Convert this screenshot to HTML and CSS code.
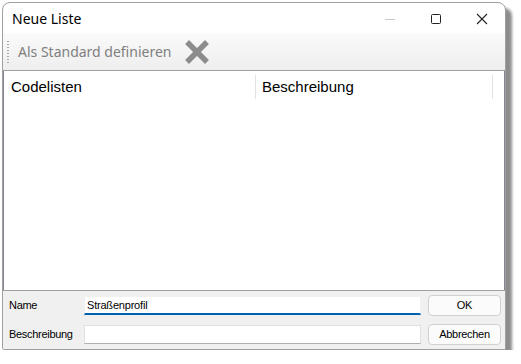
FILE: index.html
```html
<!DOCTYPE html>
<html lang="de">
<head>
    <meta charset="UTF-8">
    <title>Neue Liste</title>
    <link rel="stylesheet" href="styles.css">
</head>
<body>
<div class="window">
    <!-- Title bar -->
    <div class="titlebar">
        <span class="title">Neue Liste</span>
        <div class="controls">
            <span class="ctl"><svg width="12" height="12" viewBox="0 0 12 12"><line x1="1" y1="6.5" x2="11" y2="6.5" stroke="#c8c8c8" stroke-width="1"/></svg></span>
            <span class="ctl"><svg width="12" height="12" viewBox="0 0 12 12"><rect x="1.5" y="1.5" width="9" height="9" rx="1" fill="none" stroke="#222" stroke-width="1"/></svg></span>
            <span class="ctl"><svg width="12" height="12" viewBox="0 0 12 12"><path d="M1 1 L11 11 M11 1 L1 11" stroke="#222" stroke-width="1.1"/></svg></span>
        </div>
    </div>

    <!-- Toolbar -->
    <div class="toolbar">
        <span class="grip"></span>
        <span class="tool-text">Als Standard definieren</span>
        <svg class="tool-icon" width="24" height="24" viewBox="0 0 24 24">
            <path d="M4 4 L20 20 M20 4 L4 20" stroke="#8c8c8c" stroke-width="5.5" stroke-linecap="square"/>
        </svg>
    </div>

    <!-- List -->
    <div class="list">
        <div class="list-head">
            <div class="col col-code">Codelisten</div>
            <div class="col col-desc">Beschreibung</div>
        </div>
    </div>

    <!-- Form -->
    <div class="form">
        <div class="form-row">
            <label>Name</label>
            <input class="field focus" type="text" value="Straßenprofil">
            <button>OK</button>
        </div>
        <div class="form-row">
            <label>Beschreibung</label>
            <input class="field" type="text" value="">
            <button>Abbrechen</button>
        </div>
    </div>
</div>
</body>
</html>
```

FILE: styles.css
```css
body {
    margin: 0;
    background: #fff;
    font-family: "Liberation Sans", Arial, sans-serif;
}

.window {
    margin: 2px 0 0 2px;
    width: 502px;
    height: 346px;
    border: 1px solid #a0a0a0;
    border-radius: 8px 8px 2px 2px;
    background: #fff;
    box-shadow: 6px 6px 3px rgba(0, 0, 0, 0.45);
    display: flex;
    flex-direction: column;
    overflow: hidden;
}

.titlebar {
    height: 30px;
    display: flex;
    align-items: center;
    justify-content: space-between;
    flex-shrink: 0;
}

.title {
    font-family: "Noto Sans", "Open Sans", sans-serif;
    font-size: 14px;
    color: #000;
    margin-left: 9px;
    margin-top: 1px;
}

.controls {
    display: flex;
    margin-top: 2px;
}

.ctl {
    width: 46px;
    display: flex;
    justify-content: center;
}

.toolbar {
    height: 37px;
    flex-shrink: 0;
    display: flex;
    align-items: center;
    background: linear-gradient(#fafafa, #eeeeee);
    border-bottom: 1px solid #a0a0a0;
}

.grip {
    width: 2px;
    height: 22px;
    margin-left: 4px;
    background: repeating-linear-gradient(#a8a8a8 0 1px, transparent 1px 3px);
}

.tool-text {
    margin-left: 9px;
    font-family: "Noto Sans", "Open Sans", sans-serif;
    font-size: 14px;
    color: #7f7f7f;
}

.tool-icon {
    margin-left: 13px;
}

.list {
    flex: 1;
    border-left: 1px solid #828790;
    border-right: 1px solid #828790;
    background: #fff;
}

.list-head {
    display: flex;
    height: 28px;
    align-items: center;
}

.col {
    font-size: 15px;
    color: #000;
    height: 24px;
    line-height: 24px;
    margin-top: 3px;
    border-right: 1px solid #e2e2e2;
}

.col-code {
    width: 244px;
    padding-left: 7px;
}

.col-desc {
    width: 230px;
    padding-left: 6px;
}

.form {
    height: 59px;
    flex-shrink: 0;
    background: #f0f0f0;
    border-top: 1px solid #a0a0a0;
    display: flex;
    flex-direction: column;
    gap: 9px;
    padding-top: 4px;
    box-sizing: border-box;
}

.form-row {
    display: flex;
    align-items: center;
    height: 20px;
}

.form-row label {
    width: 75px;
    padding-left: 6px;
    font-size: 11px;
    letter-spacing: -0.3px;
    color: #000;
}

.field {
    width: 337px;
    height: 19px;
    box-sizing: border-box;
    border: 1px solid #e0e0e0;
    border-bottom-color: #b0b0b0;
    background: #fff;
    font-family: "Liberation Sans", Arial, sans-serif;
    font-size: 11px;
    letter-spacing: -0.2px;
    padding: 0 2px;
    margin: 0;
    outline: none;
}

.field.focus {
    border-color: #f0f0f0;
    border-bottom: 2px solid #0063b1;
}

.form-row button {
    margin-left: 7px;
    width: 73px;
    height: 21px;
    border: 1px solid #d0d0d0;
    border-radius: 4px;
    background: #fbfbfb;
    font-family: "Liberation Sans", Arial, sans-serif;
    font-size: 11px;
    letter-spacing: -0.3px;
    color: #000;
    padding: 0;
}
```
